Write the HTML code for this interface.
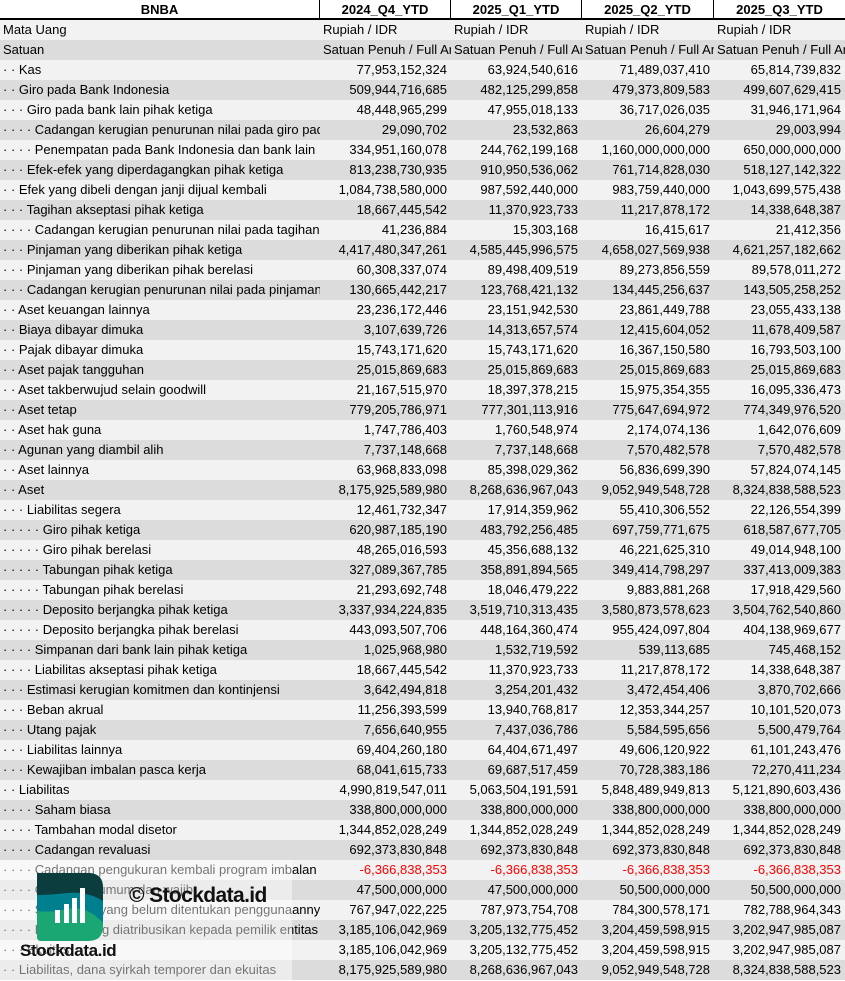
<!DOCTYPE html>
<html><head><meta charset="utf-8"><style>
*{margin:0;padding:0;box-sizing:border-box}
body{width:845px;height:981px;overflow:hidden;background:#fff;font-family:"Liberation Sans",Arial,sans-serif;font-size:13px;color:#000;position:relative}
.r{display:flex;height:20px;line-height:20px;white-space:nowrap}
.r:nth-child(even){background:#f2f2f2}
.r:nth-child(odd){background:#dcdcdc}
.c{overflow:hidden;text-align:right;padding-right:4px}
.l{width:320px;overflow:hidden;padding-left:3px}
.w1{width:131px}.w2{width:131px}.w3{width:132px}.w4{width:131px}
.h{background:#fff!important;font-weight:bold;border-bottom:2px solid #000;height:20px;line-height:19px}
.h div{text-align:center;border-right:1px solid #000;padding:0}
.lt div.c{text-align:left;padding-left:3px}
.red .c{color:#f00}
</style></head><body>
<div id="t">
<div class="r h"><div class="l" style="padding:0">BNBA</div><div class="w1">2024_Q4_YTD</div><div class="w2">2025_Q1_YTD</div><div class="w3">2025_Q2_YTD</div><div class="w4" style="border-right:none">2025_Q3_YTD</div></div>
</div>
<svg style="position:absolute;left:0;top:860px" width="292" height="121"><rect width="292" height="121" fill="#fff" opacity="0.45"/></svg>
<svg style="position:absolute;left:37px;top:873px" width="66" height="68" viewBox="0 0 66 68">
<defs><clipPath id="cp"><path d="M0 0H51Q66 0 66 15V53Q66 68 51 68H4Q0 68 0 64Z"/></clipPath></defs>
<g clip-path="url(#cp)">
<rect width="66" height="68" fill="#1aa774"/>
<path d="M0 0H66V50Q50 32 30 36Q14 40 0 38Z" fill="#00808e"/>
<path d="M0 0H66V28Q50 18 30 20Q12 22 0 22Z" fill="#0b3c3e"/>
</g>
<rect x="18" y="37" width="5" height="13" fill="#fff"/>
<rect x="27" y="31" width="5" height="19" fill="#fff"/>
<rect x="35" y="25" width="5" height="25" fill="#fff"/>
<rect x="43" y="15" width="5" height="35" fill="#fff"/>
</svg>
<div style="position:absolute;left:129px;top:884px;font-size:21px;font-weight:bold;color:#111;letter-spacing:-0.6px">© Stockdata.id</div>
<div style="position:absolute;left:20px;top:941px;font-size:17px;font-weight:bold;color:#111;letter-spacing:-0.4px">Stockdata.id</div>
<script>
const rows=[
["Mata Uang","Rupiah / IDR","Rupiah / IDR","Rupiah / IDR","Rupiah / IDR","lt"],
["Satuan","Satuan Penuh / Full Amount","Satuan Penuh / Full Amount","Satuan Penuh / Full Amount","Satuan Penuh / Full Amount","lt"],
[2,"Kas","77,953,152,324","63,924,540,616","71,489,037,410","65,814,739,832"],
[2,"Giro pada Bank Indonesia","509,944,716,685","482,125,299,858","479,373,809,583","499,607,629,415"],
[3,"Giro pada bank lain pihak ketiga","48,448,965,299","47,955,018,133","36,717,026,035","31,946,171,964"],
[4,"Cadangan kerugian penurunan nilai pada giro pada bank lain","29,090,702","23,532,863","26,604,279","29,003,994"],
[4,"Penempatan pada Bank Indonesia dan bank lain","334,951,160,078","244,762,199,168","1,160,000,000,000","650,000,000,000"],
[3,"Efek-efek yang diperdagangkan pihak ketiga","813,238,730,935","910,950,536,062","761,714,828,030","518,127,142,322"],
[2,"Efek yang dibeli dengan janji dijual kembali","1,084,738,580,000","987,592,440,000","983,759,440,000","1,043,699,575,438"],
[3,"Tagihan akseptasi pihak ketiga","18,667,445,542","11,370,923,733","11,217,878,172","14,338,648,387"],
[4,"Cadangan kerugian penurunan nilai pada tagihan akseptasi","41,236,884","15,303,168","16,415,617","21,412,356"],
[3,"Pinjaman yang diberikan pihak ketiga","4,417,480,347,261","4,585,445,996,575","4,658,027,569,938","4,621,257,182,662"],
[3,"Pinjaman yang diberikan pihak berelasi","60,308,337,074","89,498,409,519","89,273,856,559","89,578,011,272"],
[3,"Cadangan kerugian penurunan nilai pada pinjaman","130,665,442,217","123,768,421,132","134,445,256,637","143,505,258,252"],
[2,"Aset keuangan lainnya","23,236,172,446","23,151,942,530","23,861,449,788","23,055,433,138"],
[2,"Biaya dibayar dimuka","3,107,639,726","14,313,657,574","12,415,604,052","11,678,409,587"],
[2,"Pajak dibayar dimuka","15,743,171,620","15,743,171,620","16,367,150,580","16,793,503,100"],
[2,"Aset pajak tangguhan","25,015,869,683","25,015,869,683","25,015,869,683","25,015,869,683"],
[2,"Aset takberwujud selain goodwill","21,167,515,970","18,397,378,215","15,975,354,355","16,095,336,473"],
[2,"Aset tetap","779,205,786,971","777,301,113,916","775,647,694,972","774,349,976,520"],
[2,"Aset hak guna","1,747,786,403","1,760,548,974","2,174,074,136","1,642,076,609"],
[2,"Agunan yang diambil alih","7,737,148,668","7,737,148,668","7,570,482,578","7,570,482,578"],
[2,"Aset lainnya","63,968,833,098","85,398,029,362","56,836,699,390","57,824,074,145"],
[2,"Aset","8,175,925,589,980","8,268,636,967,043","9,052,949,548,728","8,324,838,588,523"],
[3,"Liabilitas segera","12,461,732,347","17,914,359,962","55,410,306,552","22,126,554,399"],
[5,"Giro pihak ketiga","620,987,185,190","483,792,256,485","697,759,771,675","618,587,677,705"],
[5,"Giro pihak berelasi","48,265,016,593","45,356,688,132","46,221,625,310","49,014,948,100"],
[5,"Tabungan pihak ketiga","327,089,367,785","358,891,894,565","349,414,798,297","337,413,009,383"],
[5,"Tabungan pihak berelasi","21,293,692,748","18,046,479,222","9,883,881,268","17,918,429,560"],
[5,"Deposito berjangka pihak ketiga","3,337,934,224,835","3,519,710,313,435","3,580,873,578,623","3,504,762,540,860"],
[5,"Deposito berjangka pihak berelasi","443,093,507,706","448,164,360,474","955,424,097,804","404,138,969,677"],
[4,"Simpanan dari bank lain pihak ketiga","1,025,968,980","1,532,719,592","539,113,685","745,468,152"],
[4,"Liabilitas akseptasi pihak ketiga","18,667,445,542","11,370,923,733","11,217,878,172","14,338,648,387"],
[3,"Estimasi kerugian komitmen dan kontinjensi","3,642,494,818","3,254,201,432","3,472,454,406","3,870,702,666"],
[3,"Beban akrual","11,256,393,599","13,940,768,817","12,353,344,257","10,101,520,073"],
[3,"Utang pajak","7,656,640,955","7,437,036,786","5,584,595,656","5,500,479,764"],
[3,"Liabilitas lainnya","69,404,260,180","64,404,671,497","49,606,120,922","61,101,243,476"],
[3,"Kewajiban imbalan pasca kerja","68,041,615,733","69,687,517,459","70,728,383,186","72,270,411,234"],
[2,"Liabilitas","4,990,819,547,011","5,063,504,191,591","5,848,489,949,813","5,121,890,603,436"],
[4,"Saham biasa","338,800,000,000","338,800,000,000","338,800,000,000","338,800,000,000"],
[4,"Tambahan modal disetor","1,344,852,028,249","1,344,852,028,249","1,344,852,028,249","1,344,852,028,249"],
[4,"Cadangan revaluasi","692,373,830,848","692,373,830,848","692,373,830,848","692,373,830,848"],
[4,"Cadangan pengukuran kembali program imbalan pasti","-6,366,838,353","-6,366,838,353","-6,366,838,353","-6,366,838,353","red"],
[4,"Cadangan umum dan wajib","47,500,000,000","47,500,000,000","50,500,000,000","50,500,000,000"],
[4,"Saldo laba yang belum ditentukan penggunaannya","767,947,022,225","787,973,754,708","784,300,578,171","782,788,964,343"],
[4,"Ekuitas yang diatribusikan kepada pemilik entitas induk","3,185,106,042,969","3,205,132,775,452","3,204,459,598,915","3,202,947,985,087"],
[3,"Ekuitas","3,185,106,042,969","3,205,132,775,452","3,204,459,598,915","3,202,947,985,087"],
[2,"Liabilitas, dana syirkah temporer dan ekuitas","8,175,925,589,980","8,268,636,967,043","9,052,949,548,728","8,324,838,588,523"]
];
let h="";
for(const r of rows){
 let lab,v,cls="";
 if(typeof r[0]==="number"){lab="· ".repeat(r[0])+r[1];v=r.slice(2,6);cls=r[6]||"";}
 else{lab=r[0];v=r.slice(1,5);cls=r[5]||"";}
 h+=`<div class="r ${cls}"><div class="l">${lab}</div><div class="c w1">${v[0]}</div><div class="c w2">${v[1]}</div><div class="c w3">${v[2]}</div><div class="c w4">${v[3]}</div></div>`;
}
document.getElementById("t").insertAdjacentHTML("beforeend",h);
</script>
</body></html>
